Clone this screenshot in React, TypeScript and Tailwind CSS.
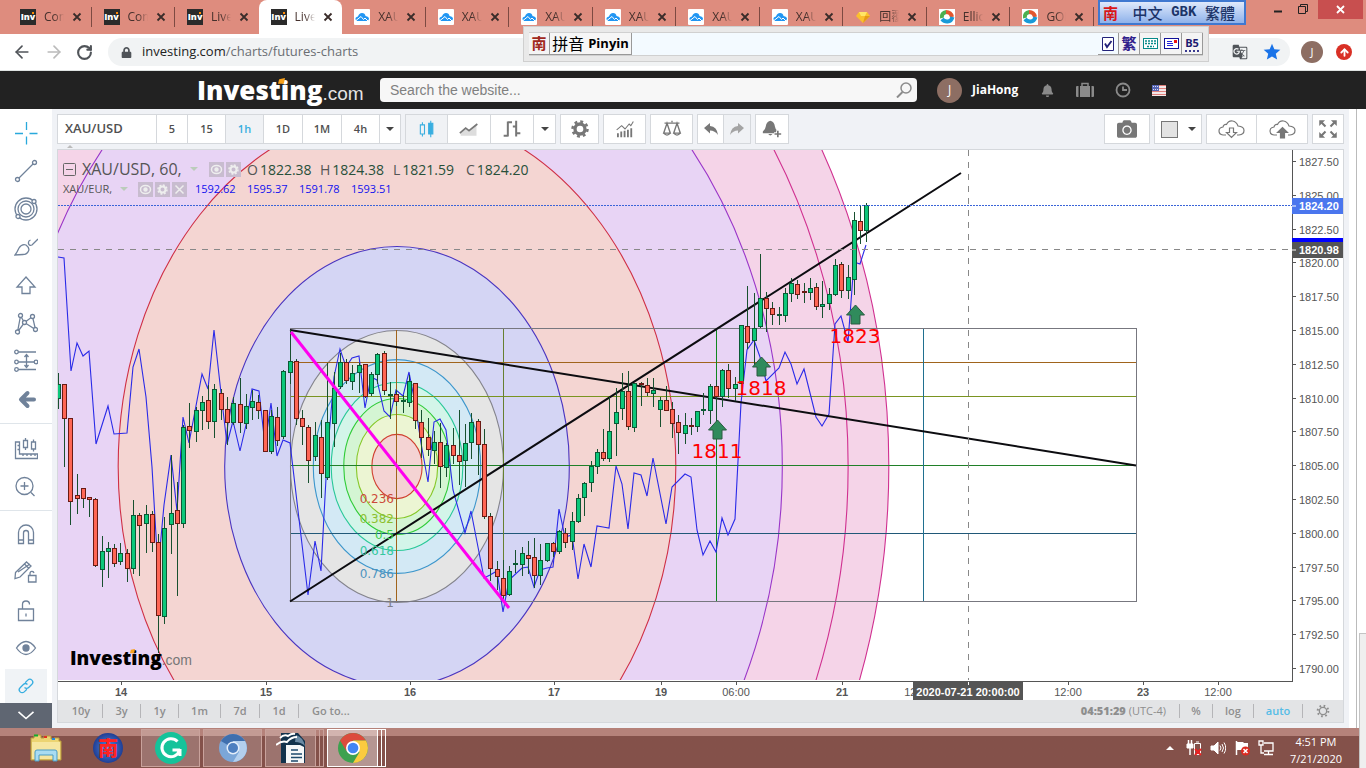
import type { ReactNode } from 'react'
import { clsx } from 'clsx'
import { ArrowLeft, ArrowRight, RotateCw, ArrowUp } from 'lucide-react'
import { FaBell, FaCamera, FaLock } from 'react-icons/fa'
import { MdGTranslate, MdStar } from 'react-icons/md'

type Candle = [x: number, high: number, low: number, top: number, bottom: number, up: 0 | 1]

const candles: Candle[] = [
  [58, 373, 408, 384, 398, 1], [64, 384, 466, 384, 418, 0], [70, 418, 524, 418, 501, 0], [77, 474, 513, 495, 498, 0],
  [83, 488, 507, 488, 498, 0], [89, 497, 516, 497, 499, 0], [95, 498, 566, 499, 565, 0], [102, 536, 586, 551, 569, 1],
  [108, 542, 577, 548, 551, 1], [114, 544, 566, 548, 563, 0], [120, 543, 564, 553, 561, 1], [127, 549, 581, 553, 568, 0],
  [133, 500, 573, 515, 568, 1], [139, 513, 575, 515, 525, 0], [146, 505, 552, 514, 523, 1], [152, 511, 551, 514, 542, 0],
  [158, 534, 652, 542, 615, 0], [164, 517, 623, 528, 616, 1], [171, 455, 553, 513, 524, 1], [177, 482, 595, 510, 523, 0],
  [183, 425, 527, 427, 523, 1], [189, 403, 447, 426, 430, 0], [196, 407, 441, 410, 431, 1], [202, 396, 429, 402, 410, 1],
  [208, 385, 428, 400, 421, 0], [214, 384, 437, 389, 421, 1], [221, 389, 419, 393, 409, 0], [227, 397, 444, 409, 422, 0],
  [233, 397, 424, 403, 422, 1], [240, 378, 432, 404, 422, 0], [246, 394, 428, 406, 423, 1], [252, 390, 419, 401, 407, 1],
  [258, 395, 418, 402, 410, 0], [265, 410, 451, 410, 451, 0], [271, 410, 453, 416, 451, 1], [277, 407, 445, 417, 440, 0],
  [283, 370, 438, 371, 436, 1], [290, 330, 383, 361, 372, 1], [296, 359, 424, 361, 418, 0], [302, 410, 444, 418, 426, 0],
  [308, 425, 482, 427, 460, 0], [315, 422, 460, 435, 456, 1], [321, 420, 497, 437, 473, 0], [327, 363, 479, 422, 477, 1],
  [334, 372, 446, 388, 423, 1], [340, 353, 388, 362, 386, 1], [346, 359, 383, 362, 380, 0], [352, 365, 389, 373, 381, 1],
  [359, 363, 392, 365, 372, 1], [365, 364, 397, 364, 396, 0], [371, 372, 395, 374, 393, 1], [377, 353, 383, 354, 374, 1],
  [384, 351, 394, 353, 390, 0], [390, 382, 418, 394, 395, 1], [396, 390, 405, 394, 401, 0], [403, 395, 412, 400, 401, 1],
  [409, 375, 406, 381, 402, 1], [415, 383, 428, 383, 420, 0], [421, 410, 457, 422, 437, 0], [428, 418, 455, 437, 449, 0],
  [434, 431, 463, 442, 450, 1], [440, 423, 487, 442, 466, 0], [446, 443, 476, 445, 467, 1], [453, 428, 463, 445, 455, 0],
  [459, 410, 484, 455, 461, 0], [465, 424, 486, 443, 460, 1], [471, 413, 458, 422, 442, 1], [478, 419, 474, 421, 444, 0],
  [484, 429, 518, 444, 516, 0], [490, 513, 580, 516, 568, 0], [497, 561, 589, 569, 576, 0], [503, 560, 602, 578, 595, 0],
  [509, 566, 595, 571, 594, 1], [515, 550, 572, 563, 564, 1], [522, 547, 575, 553, 564, 1], [528, 541, 573, 555, 558, 0],
  [534, 538, 587, 557, 575, 0], [540, 544, 584, 560, 575, 1], [547, 543, 561, 543, 560, 1], [553, 542, 556, 543, 551, 0],
  [559, 530, 553, 531, 551, 1], [565, 528, 547, 533, 542, 0], [572, 512, 549, 521, 541, 1], [578, 494, 522, 498, 521, 1],
  [584, 482, 515, 483, 497, 1], [591, 461, 491, 466, 482, 1], [597, 449, 473, 452, 466, 1], [603, 429, 460, 452, 458, 0],
  [609, 397, 461, 431, 458, 1], [616, 388, 455, 412, 423, 1], [622, 373, 419, 391, 408, 1], [628, 371, 429, 391, 426, 0],
  [634, 383, 431, 383, 427, 1], [641, 382, 405, 383, 384, 0], [647, 378, 395, 385, 392, 0], [653, 378, 406, 390, 393, 1],
  [660, 397, 426, 400, 409, 1], [666, 386, 410, 400, 410, 0], [672, 402, 437, 409, 423, 0], [678, 415, 453, 422, 432, 0],
  [685, 413, 443, 425, 433, 1], [691, 418, 434, 425, 426, 0], [697, 411, 431, 411, 426, 1], [703, 393, 414, 409, 410, 1],
  [710, 384, 423, 386, 410, 1], [716, 380, 428, 386, 396, 0], [722, 369, 406, 370, 396, 1], [728, 364, 397, 370, 388, 0],
  [735, 377, 400, 384, 388, 1], [741, 325, 383, 325, 383, 1], [747, 286, 348, 326, 342, 0], [754, 293, 365, 328, 340, 1],
  [760, 254, 327, 298, 326, 1], [766, 292, 331, 298, 308, 0], [772, 302, 324, 308, 314, 0], [779, 307, 324, 314, 315, 1],
  [785, 288, 321, 293, 315, 1], [791, 278, 301, 283, 293, 1], [797, 280, 298, 284, 294, 0], [804, 283, 302, 291, 292, 0],
  [810, 278, 299, 288, 292, 1], [816, 283, 309, 287, 306, 0], [822, 281, 317, 304, 306, 1], [829, 288, 309, 294, 303, 1],
  [835, 259, 295, 265, 294, 1], [841, 262, 297, 264, 290, 0], [848, 265, 298, 277, 290, 1], [854, 212, 294, 220, 279, 1],
  [860, 206, 243, 221, 230, 0], [866, 203, 241, 205, 230, 1],
]

const eurLine =
  '58,257 64,258 71,371 77,343 83,356 89,351 96,444 108,406 114,434 127,433 133,367 139,349 146,397 152,467 158,570 164,505 171,455 177,511 183,417 189,443 202,374 208,389 214,330 221,393 227,444 233,421 240,451 246,425 252,389 259,391 265,445 271,403 277,456 283,440 290,443 308,595 315,541 321,571 327,460 334,377 340,349 346,367 352,358 359,356 365,408 371,377 377,380 384,411 390,417 396,390 403,396 409,372 415,403 421,443 428,482 434,422 440,419 446,430 453,490 465,533 471,511 484,578 490,575 497,571 503,612 509,580 522,568 528,567 534,587 540,570 547,568 553,567 559,509 565,537 572,535 578,579 584,544 591,567 597,526 603,527 609,528 616,466 622,484 628,529 634,473 641,475 647,496 653,458 666,524 672,487 685,474 691,477 697,530 703,555 710,541 716,552 722,518 728,535 735,519 741,403 747,350 754,340 760,357 766,381 779,368 785,352 791,364 797,384 804,369 816,417 822,426 829,414 835,324 841,316 848,342 854,262 860,264 866,245'

const rings = [
  { level: 4.618, fill: '#f5d4e8', stroke: '#d03090' },
  { level: 4.236, fill: '#f5d4e8', stroke: '#d03090' },
  { level: 3.618, fill: '#e8d4f5', stroke: '#9a35c8' },
  { level: 2.618, fill: '#f4d5d2', stroke: '#cf2f45' },
  { level: 1.618, fill: '#d4d5f4', stroke: '#4a35c0' },
  { level: 1, fill: '#e5e5e5', stroke: '#84848c' },
  { level: 0.786, fill: '#d3e9f5', stroke: '#3c96cc' },
  { level: 0.618, fill: '#d3f5e9', stroke: '#28c898' },
  { level: 0.5, fill: '#d4f5d3', stroke: '#30cc38' },
  { level: 0.382, fill: '#ecf5d3', stroke: '#86c828' },
  { level: 0.236, fill: '#f4d3d3', stroke: '#d04030' },
]

const ringLabels = [
  { text: '0.236', y: 503, fill: '#cc4a3a' },
  { text: '0.382', y: 523, fill: '#8cc030' },
  { text: '0.5', y: 539, fill: '#40cc48' },
  { text: '0.618', y: 555, fill: '#34c8a0' },
  { text: '0.786', y: 578, fill: '#4c94c0' },
  { text: '1', y: 607, fill: '#808088' },
]

const timeTicks = [
  { x: 121, text: '14', bold: true }, { x: 266, text: '15', bold: true }, { x: 410, text: '16', bold: true },
  { x: 554, text: '17', bold: true }, { x: 661, text: '19', bold: true }, { x: 736, text: '06:00' },
  { x: 842, text: '21', bold: true }, { x: 918, text: '12:00' }, { x: 1068, text: '12:00' },
  { x: 1143, text: '23', bold: true }, { x: 1218, text: '12:00' },
]

const signals = [
  { x: 717, y: 420, text: '1811' },
  { x: 761, y: 357, text: '1818' },
  { x: 855, y: 305, text: '1823' },
]

function Chart() {
  return (
    <svg viewBox="58 150 1285 550" className="block h-auto w-full bg-white" role="img" aria-label="XAU/USD chart">
      <clipPath id="plot">
        <rect x="58" y="150" width="1234" height="530" />
      </clipPath>
      <g clipPath="url(#plot)" fill="none">
        {rings.map((r) => (
          <ellipse key={r.level} cx="397" cy="466.5" rx={106.5 * r.level} ry={136 * r.level} fill={r.fill} stroke={r.stroke} strokeWidth="1.1" />
        ))}
        <g shapeRendering="crispEdges">
          <path d="M290 362.5H1136" stroke="#a0641c" />
          <path d="M290 396.5H1136" stroke="#7a9420" />
          <path d="M290 465.5H1136" stroke="#208028" />
          <path d="M290 533.5H1136" stroke="#205878" />
          <path d="M396.5 330V602" stroke="#a0641c" />
          <path d="M503.5 328V601" stroke="#668030" />
          <path d="M716.5 330V601" stroke="#108820" />
          <path d="M923.5 328V601" stroke="#207090" />
          <rect x="290.5" y="328.5" width="846" height="273" stroke="#77777f" />
        </g>
        <polyline points={eurLine} stroke="#2a2ae8" strokeWidth="1.1" />
        <path d="M290 330L1136 465.5M290 601.5L961 173" stroke="#0c0c10" strokeWidth="2" />
        {candles.map(([x, high, low, top, bottom, up]) => (
          <g key={x} shapeRendering="crispEdges">
            <path d={`M${x + 0.5} ${high}V${low + 1}`} stroke="#18502f" />
            <rect
              x={x - 1.5}
              y={top + 0.5}
              width="4"
              height={bottom - top}
              fill={up ? '#0cc77a' : '#ff6655'}
              stroke={up ? '#0a5a35' : '#6a1a14'}
            />
          </g>
        ))}
        <path d="M291 332L509 608" stroke="#ff00f0" strokeWidth="3" />
        <path d="M58 249.5H1292M968.5 150V681" stroke="#888" strokeDasharray="6 6" />
        <path d="M58 205.5H1292" stroke="#3a64d8" strokeDasharray="2 1" />
        {signals.map((s) => (
          <g key={s.text}>
            <path
              d={`M${s.x + 0.5} ${s.y}l9 10h-4.500v9h-9v-9h-4.500z`}
              fill="#308b5c"
              stroke="#2a5a40"
            />
            <text x={s.x} y={s.y + 38} textAnchor="middle" fontSize="20" fill="#f00" fontFamily="DejaVu Sans">
              {s.text}
            </text>
          </g>
        ))}
        {ringLabels.map((l) => (
          <text key={l.text} x="394" y={l.y} textAnchor="end" fontSize="12" fill={l.fill} fontFamily="DejaVu Sans">
            {l.text}
          </text>
        ))}
      </g>

      {/* price scale */}
      <path d="M58 681.5H1292.5V150" fill="none" stroke="#555" shapeRendering="crispEdges" />
      <g fontSize="11" fontFamily="Liberation Sans" fill="#555">
        {Array.from({ length: 16 }, (_, i) => {
          const y = Math.round(161 + i * 33.8)
          return (
            <g key={i}>
              <path d={`M1293 ${y + 0.5}h3`} stroke="#555" />
              <text x="1299" y={y + 5}>{(1827.5 - i * 2.5).toFixed(2)}</text>
            </g>
          )
        })}
        {timeTicks.map((t) => (
          <g key={t.x}>
            <path d={`M${t.x + 0.5} 682v3`} stroke="#555" />
            <text x={t.x} y="696" textAnchor="middle" fontWeight={t.bold ? 700 : 400}>{t.text}</text>
          </g>
        ))}
        <rect x="1292" y="198" width="51" height="16" fill="#4a76ee" />
        <rect x="1292" y="238" width="51" height="4" fill="#00f" />
        <rect x="1292" y="242" width="51" height="16" fill="#555" />
        <rect x="913" y="682" width="110" height="18" fill="#555" />
        <path d="M1292 206h4M1292 250h4M968.5 682v3" stroke="#fff" />
        <g fill="#fff" fontWeight="700">
          <text x="1299" y="210">1824.20</text>
          <text x="1299" y="254">1820.98</text>
          <text x="968" y="696" textAnchor="middle">2020-07-21 20:00:00</text>
        </g>
      </g>
    </svg>
  )
}

function InvestingLogo({ small }: { small?: boolean }) {
  return (
    <span className="relative flex items-baseline leading-none">
      <span className={clsx("font-['Open_Sans'] font-extrabold", small ? 'text-[19px] text-black' : 'text-[26px] text-white')}>
        Investing
      </span>
      <span className={clsx("font-['Liberation_Sans']", small ? 'text-[14px] text-[#777]' : 'text-[19px] text-[#e4e4e4]')}>.com</span>
      <svg className={clsx('absolute', small ? 'left-[60px] top-0 size-[5px]' : 'left-[81px] top-[1px] size-[7px]')} viewBox="0 0 6 6">
        <path d="M1 1L6 0L5 5H0z" fill="#f7a01b" />
      </svg>
    </span>
  )
}

function Legend() {
  const boxes = (n: number) =>
    [
      <g key="eye"><ellipse cx="7.5" cy="7.5" rx="5" ry="4" /><circle cx="7.5" cy="7.5" r="1.5" fill="#eee" /></g>,
      <g key="gear"><circle cx="7.5" cy="7.5" r="3" strokeWidth="2" /><circle cx="7.5" cy="7.5" r="4.5" strokeDasharray="2 1.5" /></g>,
      <path key="x" d="M3.500 3.500l8 8M11.500 3.500l-8 8" />,
    ]
      .slice(0, n)
      .map((icon, i) => (
        <svg key={i} className="size-[15px] bg-[#c8bccf]" viewBox="0 0 15 15" fill="none" stroke="#eee" strokeWidth="1.500">
          {icon}
        </svg>
      ))
  return (
    <div className="absolute left-[5px] top-[9px] font-['Open_Sans'] text-[#555]">
      <div className="flex h-5 items-center text-[14px]">
        <svg className="mr-[6px] size-[13px]" viewBox="0 0 13 13" fill="none" stroke="#666">
          <rect x=".5" y=".5" width="12" height="12" rx="1" />
          <path d="M3 6.500h7" />
        </svg>
        <span className="w-[104px] whitespace-nowrap text-[16px]">XAU/USD, 60,</span>
        <span className="mx-1 h-0 w-0 border-x-4 border-t-4 border-x-transparent border-t-[#bcb]" />
        <span className="ml-[7px] flex w-[38px] gap-[2px]">{boxes(2)}</span>
        {[['O', '1822.38'], ['H', '1824.38'], ['L', '1821.59'], ['C', '1824.20']].map(([k, v]) => (
          <span key={k} className="flex w-[73px] gap-[2px]">
            {k}
            <span className="text-[#28503a]">{v}</span>
          </span>
        ))}
      </div>
      <div className="flex h-5 items-center text-[11px]">
        <span className="w-[57px]">XAU/EUR,</span>
        <span className="h-0 w-0 border-x-4 border-t-4 border-x-transparent border-t-[#bcb]" />
        <span className="ml-[10px] flex w-[57px] gap-[2px]">{boxes(3)}</span>
        {['1592.62', '1595.37', '1591.78', '1593.51'].map((v) => (
          <span key={v} className="w-[52px] text-[#11e]">{v}</span>
        ))}
      </div>
    </div>
  )
}

function Favicon({ kind }: { kind: string }) {
  if (kind === 'inv')
    return (
      <span className="relative flex size-4 items-center justify-center bg-[#2b2b2b] font-['Open_Sans'] text-[9px] font-extrabold text-white">
        Inv
        <span className="absolute right-[2px] top-[3px] size-[2px] bg-orange-400" />
      </span>
    )
  if (kind === 'cloud')
    return (
      <svg className="size-4" viewBox="0 0 16 16">
        <rect width="16" height="16" rx="1" fill="#fff" />
        <path d="M3 12Q1 11 1.500 9Q2.500 7.500 4 7.500Q5 4 8 4Q11 4 11.500 7Q15 7.500 15 10Q14.500 12 12.500 12z" fill="#2196f3" />
        <path d="M2 11.500L7 7.500L9.500 10.500L11 9L14 12" fill="none" stroke="#fff" />
      </svg>
    )
  if (kind === 'gem')
    return (
      <svg className="size-4" viewBox="0 0 16 16">
        <path d="M4 3h8l3 4-7 7-7-7z" fill="#fbc02d" />
        <path d="M4 3h8l-2 4H6z" fill="#ffe566" />
        <path d="M10 7h5l-7 7z" fill="#e59a18" />
      </svg>
    )
  return (
    <svg className="size-4" viewBox="0 0 16 16" fill="none" strokeWidth="4">
      <rect width="16" height="16" fill="#fff" />
      <path d="M3 9Q2 4 7.500 3" stroke="#4caf50" />
      <path d="M7 3Q12 3 13 8" stroke="#e4572e" />
      <path d="M13.500 8Q12 13 8 12.500Q5 12.500 3 10" stroke="#1a9ad8" />
    </svg>
  )
}

const tabs = [
  ['inv', 'Com'], ['inv', 'Com'], ['inv', 'Live'], ['inv', 'Live'], ['cloud', 'XAU'], ['cloud', 'XAU'], ['cloud', 'XAU'],
  ['cloud', 'XAU'], ['cloud', 'XAU'], ['cloud', 'XAU'], ['gem', '回覆'], ['swirl', 'Ellio'], ['swirl', 'GOL'],
]

function TabStrip() {
  return (
    <div className="flex h-[34px] bg-[#de8c7e] pl-2">
      <div className="flex min-w-0 flex-1">
        {tabs.map(([icon, title], i) => (
          <div
            key={i}
            className={clsx(
              'relative flex min-w-0 flex-1 items-center pl-3',
              i === 3 && 'rounded-t-lg bg-white',
            )}
          >
            <Favicon kind={icon} />
            <span className="ml-2 w-5 overflow-hidden whitespace-nowrap font-['Open_Sans','Noto_Sans_CJK_TC'] text-[12px] text-[#45302c] [mask-image:linear-gradient(to_right,black_50%,transparent)]">
              {title}
            </span>
            <button aria-label="Close tab" className="ml-2">
              <svg className="size-[10px]" viewBox="0 0 10 10" stroke="#3a2c2a" strokeWidth="1.800">
                <path d="M1.500 1.500l7 7M8.500 1.500l-7 7" />
              </svg>
            </button>
            {i !== 3 && i !== 2 && <span className="ml-auto h-5 w-px bg-[#7d4a42]" />}
          </div>
        ))}
      </div>
      <div className="flex w-[272px] justify-end pr-[3px]">
        <button aria-label="Minimize" className="h-5 w-6">
          <svg className="size-full" viewBox="0 0 24 20"><path d="M6 11.500h8" stroke="#222" strokeWidth="2" /></svg>
        </button>
        <button aria-label="Restore" className="mr-[2px] h-5 w-6">
          <svg className="size-full" viewBox="0 0 24 20" fill="none" stroke="#222"><path d="M6.500 6.500h7v7h-7zM8.500 6V4.500h7v7H14" /></svg>
        </button>
        <button aria-label="Close" className="h-[19px] w-[45px] bg-[#c84f4f]">
          <svg className="size-full" viewBox="0 0 45 19"><path d="M19 6l7 7M26 6l-7 7" stroke="#fff" strokeWidth="1.800" /></svg>
        </button>
      </div>
    </div>
  )
}

function AddressBar() {
  return (
    <div className="flex h-[37px] items-center border-b border-[#dfe3e2] bg-white pl-[12px] pr-[14px] text-[#505459]">
      <button aria-label="Back" className="w-8"><ArrowLeft size={20} strokeWidth={2} /></button>
      <button aria-label="Forward" className="w-8 text-[#bbb]"><ArrowRight size={20} strokeWidth={2} /></button>
      <button aria-label="Reload" className="w-8"><RotateCw size={17} strokeWidth={3} /></button>
      <div className="flex h-7 flex-1 items-center rounded-full bg-[#f1f3f4] pl-[13px] pr-[8px]">
        <FaLock size={11} />
        <a href="#" className="ml-[10px] flex-1 font-['Open_Sans'] text-[13px] text-[#6a6e73]">
          <span className="text-[#222]">investing.com</span>/charts/futures-charts
        </a>
        <MdGTranslate size={16} className="mr-[14px]" />
        <MdStar size={20} color="#1a73e8" />
      </div>
      <span className="ml-[11px] flex size-[22px] items-center justify-center rounded-full bg-[#8d6e63] font-['Open_Sans'] text-[11px] text-white">J</span>
      <button aria-label="Update" className="ml-[13px] flex size-4 items-center justify-center rounded-full bg-[#d93025] text-white">
        <ArrowUp size={11} strokeWidth={4} />
      </button>
    </div>
  )
}

function SiteHeader() {
  return (
    <header className="flex h-[38px] items-center bg-[#222] pl-[197px]">
      <a href="#" className="w-[183px] shrink-0"><InvestingLogo /></a>
      <label className="flex h-6 min-w-0 flex-1 items-center rounded-sm bg-[#f7f7f7] px-[5px]">
        <input
          aria-label="Search the website"
          placeholder="Search the website..."
          className="min-w-0 flex-1 bg-transparent px-[5px] font-['Liberation_Sans'] text-[14px] outline-none placeholder:text-[#808080]"
        />
        <svg className="size-4" viewBox="0 0 16 16" fill="none" stroke="#8c8c8c" strokeWidth="1.500">
          <circle cx="10" cy="6" r="5" />
          <path d="M6.500 10L1 15.500" strokeWidth="2" />
        </svg>
      </label>
      <div className="flex w-[449px] shrink-0 items-center pl-5 text-[#8a8a8a]">
        <span className="flex size-[25px] items-center justify-center rounded-full bg-[#8d6e63] font-['Open_Sans'] text-[12px] text-white">J</span>
        <a href="#" className="ml-[10px] w-[69px] font-['Open_Sans'] text-[12px] font-bold text-white">JiaHong</a>
        <button aria-label="Alerts"><FaBell size={13} /></button>
        <button aria-label="Portfolio" className="ml-[22px]">
          <svg className="h-4 w-[18px]" viewBox="0 0 18 16" fill="currentColor">
            <path d="M1 4h1.500v11H1Q0 15 0 14V5Q0 4 1 4zM15.500 4H17Q18 4 18 5v9q0 1-1 1h-1.500zM4 4h10v11H4z" />
            <path d="M6 4V1.500h6V4" fill="none" stroke="currentColor" strokeWidth="1.500" />
          </svg>
        </button>
        <button aria-label="Recent" className="ml-[21px]">
          <svg className="size-4" viewBox="0 0 16 16" fill="none" stroke="currentColor" strokeWidth="1.800">
            <circle cx="8" cy="8" r="6.500" />
            <path d="M8 4.500V8h4" />
          </svg>
        </button>
        <svg className="ml-[21px] h-[11px] w-[14px]" viewBox="0 0 14 11">
          <rect width="14" height="11" fill="#f3e8e8" />
          <path d="M0 .500h14M0 3.500h14M0 6.500h14M0 9.500h14" stroke="#e0807c" />
          <rect width="7" height="6" fill="#5565b4" />
          <path d="M1 1.500h5M1 4.500h5" stroke="#dde" strokeDasharray="1 1" />
        </svg>
      </div>
    </header>
  )
}

function Icon({ children, className = 'size-6' }: { children: ReactNode; className?: string }) {
  return (
    <svg className={className} viewBox="0 0 24 24" fill="none" stroke="currentColor" strokeWidth="1.300">
      {children}
    </svg>
  )
}

const drawTools: [string, ReactNode][] = [
  ['Trend line', <><path d="M4.500 19.500L19.500 4.500" /><circle cx="3.500" cy="20.500" r="2" fill="#fff" /><circle cx="20.500" cy="3.500" r="2" fill="#fff" /></>],
  ['Fib circles', <><circle cx="12" cy="12" r="11" /><circle cx="12" cy="12" r="8" /><circle cx="12" cy="12" r="5" /><circle cx="20" cy="4.500" r="2" fill="#fff" /><circle cx="4" cy="19.500" r="2" fill="#fff" /></>],
  ['Brush', <path d="M1 20Q3 17.500 5 13Q8 8.500 12 10Q16 13 14.500 16Q13 19.500 9 19.500zM24 4l-6 6q-3 1-3.500-1.500Q14 6 16.500 5" />],
  ['Arrow', <path d="M12 4L21 14h-5v6.500H8V14H3z" />],
  ['Pattern', <><path d="M3.500 21L6.500 5M6.500 5L10.500 11.500L18.500 5.500L21.500 18.500L10.500 11.500L3.500 21" /><circle cx="3.500" cy="21" r="2" fill="#fff" /><circle cx="6.500" cy="4.500" r="2" fill="#fff" /><circle cx="10.500" cy="11.500" r="2" fill="#fff" /><circle cx="18.500" cy="5.500" r="2" fill="#fff" /><circle cx="21.500" cy="18.500" r="2" fill="#fff" /></>],
  ['Position', <><path d="M4 3h18M4 13h16M4 20.500h18M12.500 6v11M10.500 8l2-2.500 2 2.500M10.500 16l2 2.500 2-2.500" /><circle cx="2.500" cy="3" r="1.800" fill="#fff" /><circle cx="2.500" cy="13" r="1.800" fill="#fff" /><circle cx="22" cy="13" r="1.800" fill="#fff" /><circle cx="2.500" cy="20.500" r="1.800" fill="#fff" /></>],
  ['Back', <path d="M20 12.500H7M13.500 6L7 12.500l6.500 6.500" strokeWidth="4" strokeLinecap="round" strokeLinejoin="round" />],
]

const measureTools: [string, ReactNode][] = [
  ['Measure', <><path d="M1.500 5h4v12h18v4.500h-22zM3.500 8.500h2M3.500 12.500h2M9 19v-2M13 19v-2M17 19v-2M21 19v-2M11.500 1v2.500M11.500 10.500V13M19.500 2.500V5M19.500 12v2.500" /><path d="M9.500 3.500h4v7h-4zM17.500 5h4v7h-4z" /></>],
  ['Zoom in', <><circle cx="10.500" cy="11" r="8.500" /><path d="M6.500 11h8M10.500 7v8M17 17.500l3.500 3.500" /></>],
]

const lockTools: [string, ReactNode][] = [
  ['Magnet', <path d="M4.500 21.500V10.500a7.500 7.500 0 0 1 15 0V21.500h-5V11a2.500 2.500 0 0 0-5 0v10.500zM4.500 18h5M14.500 18h5" />],
  ['Lock drawing', <><path d="M1.500 12.500L12.500 2l4.500 4L6 17l-5 1.500zM4 12l12-8M10.500 4l4.500 4.500" /><path d="M14.500 15.500h7.500v6.500h-7.500zM16 15.500v-2.500q.500-2 2.500-1.500 1 0 1.500 1.500" fill="#fff" /></>],
  ['Lock all', <path d="M4.500 11h15v11.500h-15zM8.500 11V6.500Q8.500 3 12 3t3.500 3.500M12 15.500v3" />],
  ['Hide', <><path d="M2.500 12Q7 5.500 12 5.500T21.500 12Q17 18.500 12 18.500T2.500 12z" /><circle cx="12" cy="12" r="3" fill="currentColor" /></>],
]

function ToolGroup({ tools }: { tools: [string, ReactNode][] }) {
  return (
    <>
      {tools.map(([name, icon]) => (
        <button key={name} aria-label={name} className="flex h-[38px] items-center justify-center">
          <Icon>{icon}</Icon>
        </button>
      ))}
    </>
  )
}

function DrawingBar() {
  return (
    <aside className="flex w-[52px] shrink-0 flex-col bg-white pt-[5px] text-[#70829a]">
      <button aria-label="Cross" className="flex h-[38px] items-center justify-center text-[#29a9dc]">
        <Icon><path d="M1 12.500h8M15.500 12.500h8M12.500 1v8M12.500 15.500v8" /></Icon>
      </button>
      <ToolGroup tools={drawTools} />
      <hr className="mb-[6px] mt-[5px] border-[#dfe5ea]" />
      <ToolGroup tools={measureTools} />
      <hr className="my-1 border-[#dfe5ea]" />
      <ToolGroup tools={lockTools} />
      <button aria-label="Link" className="mx-[5px] mt-[2px] flex h-[34px] items-center justify-center bg-[#f0f3f6] text-[#38aee0]">
        <Icon className="size-5">
          <g transform="rotate(45 12 12)">
            <path d="M8.500 10V5.500a3.500 3.500 0 0 1 7 0V11a3.500 3.500 0 0 1-3.500 3.500M15.500 14v4.500a3.500 3.500 0 0 1-7 0V13a3.500 3.500 0 0 1 3.500-3.500" strokeWidth="1.500" />
          </g>
        </Icon>
      </button>
      <button aria-label="More" className="flex flex-1 items-center justify-center bg-[#5f6672] text-white">
        <Icon className="h-5 w-[22px]"><path d="M3 7l9 8 9-8" strokeWidth="2" /></Icon>
      </button>
    </aside>
  )
}

function Group({ children, label }: { children: ReactNode; label?: string }) {
  return (
    <div aria-label={label} className="flex h-[30px] divide-x divide-[#d5d8dc] border border-[#d5d8dc] bg-white">
      {children}
    </div>
  )
}

function Cell({ w, active, label, children }: { w: string; active?: boolean; label?: string; children: ReactNode }) {
  return (
    <button aria-label={label} className={clsx('flex items-center justify-center', w, active && 'bg-[#f0f2f5] text-[#39aee0]')}>
      {children}
    </button>
  )
}

const Caret = () => <span className="h-0 w-0 border-x-4 border-t-4 border-x-transparent border-t-[#444]" />

function ChartToolbar() {
  return (
    <div className="relative mb-[5px] flex gap-1 font-['Open_Sans'] text-[11px] font-semibold text-[#505050]">
      <Group label="Symbol and interval">
        <button className="w-[99px] pl-[7px] text-left text-[13px]">XAU/USD</button>
        <Cell w="w-[31px]">5</Cell>
        <Cell w="w-[38px]">15</Cell>
        <Cell w="w-[38px]" active>1h</Cell>
        <Cell w="w-[39px]">1D</Cell>
        <Cell w="w-[39px]">1M</Cell>
        <Cell w="w-[38px]">4h</Cell>
        <Cell w="w-[20px]" label="More intervals"><Caret /></Cell>
      </Group>
      <Group label="Chart style">
        <Cell w="w-[42px]" active label="Candles">
          <Icon className="size-5"><path d="M6.500 4v3M6.500 18v3M4 7h5v11H4zM16.500 2v20" /><path d="M14 5h5v13h-5z" fill="currentColor" /></Icon>
        </Cell>
        <Cell w="w-[43px]" label="Area">
          <Icon className="size-5"><path d="M2 17l6-5 4 3 9-8v13H2z" fill="#ddd" stroke="none" /><path d="M1 17l7-6 4 3 10-8" stroke="#777" strokeWidth="2" /></Icon>
        </Cell>
        <Cell w="w-[43px]" label="Bars">
          <Icon className="size-5"><path d="M7 3v18M2 20h5M7 4h5M17 2v19M13 9h4M17 17h5" stroke="#777" strokeWidth="2.400" /></Icon>
        </Cell>
        <Cell w="w-[21px]" label="More styles"><Caret /></Cell>
      </Group>
      <Group><Cell w="w-[37px]" label="Settings">
        <Icon className="size-5"><circle cx="12" cy="12" r="6" stroke="#777" strokeWidth="4" /><circle cx="12" cy="12" r="9" stroke="#777" strokeWidth="3" strokeDasharray="3.500 3.570" /></Icon>
      </Cell></Group>
      <Group><Cell w="w-[41px]" label="Indicators">
        <Icon className="size-5"><path d="M3.500 22v-5M7.500 22v-7M11.500 22v-8M15.500 22v-9M19.500 22V11" stroke="#777" strokeWidth="2.200" /><path d="M2 13l6-5 4 4 5-6 2 2 3-5" stroke="#777" /></Icon>
      </Cell></Group>
      <Group><Cell w="w-[41px]" label="Compare">
        <Icon className="size-5"><path d="M12 2v2M3 5h18M6 5L2 17h8zM18 5l-4 12h8zM2 17q4 4.500 8 0M14 17q4 4.500 8 0" stroke="#777" strokeWidth="1.600" /></Icon>
      </Cell></Group>
      <Group>
        <Cell w="w-[26px]" label="Undo">
          <svg className="h-3 w-[14px]" viewBox="0 0 14 12"><path d="M0 5L6 0v3q7 .500 8 9q-3-4.500-8-4.500v3z" fill="#777" /></svg>
        </Cell>
        <Cell w="w-[26px]" active label="Redo">
          <svg className="h-3 w-[14px]" viewBox="0 0 14 12"><path d="M14 5L8 0v3q-7 .500-8 9q3-4.500 8-4.500v3z" fill="#a4a4a4" /></svg>
        </Cell>
      </Group>
      <Group><Cell w="w-[32px]" label="Add alert">
        <Icon className="h-5 w-[22px]">
          <path d="M10 2q5 1.500 5.500 7 .500 4 3.500 6v2H1v-2q3-2 3.500-6Q5 3.500 10 2zM7.500 18h5q-2.500 3.500-5 0z" fill="#777" stroke="none" />
          <path d="M19 13.500v9M14.500 18h9" stroke="#fff" strokeWidth="4" />
          <path d="M19 14v8M15 18h8" stroke="#777" strokeWidth="2" />
        </Icon>
      </Cell></Group>
      <div className="ml-auto flex gap-1">
        <Group><Cell w="w-[44px]" label="Snapshot"><FaCamera size={20} color="#777" /></Cell></Group>
        <Group>
          <button aria-label="Background colour" className="flex w-[46px] items-center justify-center gap-[10px]">
            <span className="size-[17px] border border-[#777] bg-[#e3e3e3]" />
            <Caret />
          </button>
        </Group>
        <Group>
          {['Load', 'Save'].map((name) => (
            <Cell key={name} w="w-[50px]" label={name}>
              <svg className="h-5 w-[27px]" viewBox="0 0 27 20" fill="none" stroke="#777" strokeWidth="1.200">
                <path d="M8 16H5Q1 15.500 1 12T5 8Q5.500 5 8.500 5.500Q10.500 1.500 14.500 2T20 7Q26 7.500 26 11.500T21 16h-2" />
                {name === 'Load' ? (
                  <path d="M11.500 9h4v4.500h3l-5 5-5-5h3z" />
                ) : (
                  <path d="M11.500 19h4v-5.500h3l-5-5-5 5h3z" fill="#777" />
                )}
              </svg>
            </Cell>
          ))}
        </Group>
        <Group><Cell w="w-[30px]" label="Full screen">
          <Icon className="size-5">
            <path d="M9 9L4 4M15 9l5-5M9 15l-5 5M15 15l5 5" stroke="#777" strokeWidth="2.500" />
            <path d="M1.500 1.500h7l-7 7zM22.500 1.500v7l-7-7zM1.500 22.500v-7l7 7zM22.500 22.500h-7l7-7z" fill="#777" stroke="none" />
          </Icon>
        </Cell></Group>
      </div>
      <span className="absolute -bottom-1 left-[10px] h-0 w-0 border-x-3 border-b-3 border-x-transparent border-b-[#bbb]" />
    </div>
  )
}

function RangeBar() {
  const sep = <span className="h-[14px] w-px bg-[#b5b5b8]" />
  return (
    <div className="flex h-[23px] items-center border-b border-[#d5d8dc] bg-[#e3e4e6] font-['Open_Sans'] text-[11px] font-semibold text-[#8e8e8e]">
      <button className="w-[44px] pl-[2px]">10y</button>{sep}
      <button className="w-[37px]">3y</button>{sep}
      <button className="w-[37px]">1y</button>{sep}
      <button className="w-[41px]">1m</button>{sep}
      <button className="w-[38px]">7d</button>{sep}
      <button className="w-[38px]">1d</button>{sep}
      <button className="ml-[13px]">Go to...</button>
      <span className="ml-auto mr-[13px]"><b>04:51:29</b> <span className="font-normal">(UTC-4)</span></span>{sep}
      <button className="w-[32px]">%</button>{sep}
      <button className="w-[40px]">log</button>{sep}
      <button className="w-[48px] text-[#55bce6]">auto</button>{sep}
      <button aria-label="Scale settings" className="flex w-[40px] justify-center">
        <Icon className="size-4"><circle cx="12" cy="12" r="5.500" strokeWidth="2" /><circle cx="12" cy="12" r="8" strokeWidth="3" strokeDasharray="2.500 3.780" /></Icon>
      </button>
    </div>
  )
}

function ImeWindows() {
  const key = 'flex h-[22px] items-center justify-center border-b border-r border-[#999]'
  return (
    <>
      <div className="absolute left-[523px] top-[26px] flex h-9 w-[686px] items-center border border-[#cfcfcf] bg-[#e9e9e9] px-[5px] font-['Open_Sans','Noto_Sans_CJK_TC'] text-black">
        <div className="flex h-6 flex-1 items-center border-y border-[#d0d0d0] bg-[#f3faff]">
          <button className={clsx(key, 'w-[21px] bg-[#f4f4f4] text-[15px] font-bold text-[#a02820]')}>南</button>
          <button className={clsx(key, 'w-[82px] gap-1 bg-[#f6f6f6] text-[13px] font-bold')}>
            <span className="text-[16px] font-normal">拼音</span>Pinyin
          </button>
          <span className="flex-1" />
          <label className={clsx(key, 'w-[21px]')}>
            <input type="checkbox" defaultChecked aria-label="Enable" className="peer sr-only" />
            <svg className="h-[14px] w-3" viewBox="0 0 12 14" fill="#fff" stroke="#22227a"><path d="M.500.500h11v13H.500z" /><path d="M3 6.500l2 3.500 4.500-6" fill="none" strokeWidth="1.800" /></svg>
          </label>
          <button className={clsx(key, 'w-[21px] bg-[#f4f4f4] text-[15px] font-bold text-[#30208c]')}>繁</button>
          <button aria-label="Keyboard" className={clsx(key, 'w-[21px] bg-[#f4f4f4]')}>
            <svg className="h-[11px] w-[15px]" viewBox="0 0 15 11"><rect x=".5" y=".5" width="14" height="10" fill="#fff" stroke="#078a8a" /><path d="M2 3h11M2 5.500h11M4 8.500h7" stroke="#078a8a" strokeWidth="1.500" strokeDasharray="2 1" /></svg>
          </button>
          <button aria-label="Card" className={clsx(key, 'w-[21px] bg-[#f4f4f4]')}>
            <svg className="h-[11px] w-[15px]" viewBox="0 0 15 11"><rect x=".5" y=".5" width="14" height="10" fill="#fff" stroke="#119" /><path d="M3 3.500h5M3 5.500h6M3 7.500h6" stroke="#22d" /><rect x="10" y="2" width="3" height="3" fill="#e11" /></svg>
          </button>
          <button className={clsx(key, 'w-[21px] bg-[#f4f4f4] text-[11px] font-bold text-[#1c1a70]')}>
            <span className="border-b-2 border-dotted border-[#3a3a90] leading-[14px]">B5</span>
          </button>
        </div>
      </div>
      <div className="absolute left-[1098px] top-0 flex h-[25px] w-[148px] items-center justify-between border-2 border-[#3f78d0] bg-linear-to-b from-[#dfe9fb] to-[#8fb2ea] pl-[3px] pr-[9px] font-['Noto_Sans_CJK_TC'] text-[15px] font-medium leading-[21px] text-[#1c3468]">
        <span className="mr-[6px] font-bold text-[#d81818]">南</span>
        <span>中文</span>
        <span className="font-['Liberation_Mono'] text-[14px] font-bold">GBK</span>
        <span>繁體</span>
      </div>
    </>
  )
}

function Taskbar() {
  const win = 'flex h-[38px] items-center justify-center border border-[#c9a29c] bg-white/20'
  return (
    <footer className="flex h-10 items-center bg-linear-to-b from-[#b5827a] from-20% to-[#84514a] to-20% pl-[17px] pr-6 font-['Open_Sans'] text-white">
      <button aria-label="Files" className="flex w-[58px] justify-center">
        <svg className="h-7 w-8" viewBox="0 0 32 28">
          <path d="M1 4h3V1h7v3h3V2h7v3h3V4h5v3h2v19H1z" fill="#ecd472" stroke="#b89a3c" />
          <path d="M4 1.500h4" stroke="#1a3" strokeWidth="2" /><path d="M14 3h3" stroke="#d32" strokeWidth="2" /><path d="M22 5h3" stroke="#28d" strokeWidth="2" />
          <path d="M2 8h28v17H2z" fill="#f6e6a0" />
          <path d="M5 27V18q0-2 2-2h18q2 0 2 2v9h-4v-6H9v6z" fill="#a9dcf2" stroke="#4a9cc4" />
        </svg>
      </button>
      <button aria-label="NJStar" className="flex w-[66px] items-center justify-center">
        <span className="flex size-[30px] items-center justify-center rounded-full bg-radial from-[#5a8ae0] to-[#0c1e78] font-['Noto_Sans_CJK_SC'] text-[20px] font-black text-[#f22]">南</span>
      </button>
      <div className="flex gap-[3px]">
        <button aria-label="Grammarly" className={clsx(win, 'w-[59px]')}>
          <svg className="size-8" viewBox="0 0 32 32" fill="none" stroke="#fff" strokeWidth="3">
            <circle cx="16" cy="16" r="16" fill="#15c39a" stroke="none" />
            <path d="M22.500 9.500A9 9 0 1 0 24.500 18.500M17.500 18H25M25 17v7" />
          </svg>
        </button>
        <button aria-label="Chromium" className={clsx(win, 'w-[59px]')}>
          <svg className="size-7" viewBox="0 0 28 28">
            <circle cx="14" cy="14" r="14" fill="#7ba6d8" />
            <path d="M14 14L1.900 7A14 14 0 0 1 26.100 7H14z" fill="#3f6fae" />
            <path d="M14 28a14 14 0 0 0 12-21H14l6 11z" fill="#b3cfee" />
            <circle cx="14" cy="14" r="6.500" fill="#e4eefa" /><circle cx="14" cy="14" r="5" fill="#4d7fc0" />
          </svg>
        </button>
        <div className="flex">
          <button aria-label="Writer" className={clsx(win, 'w-[51px]')}>
            <svg className="h-8 w-[30px]" viewBox="0 0 30 32">
              <path d="M5 1h17l7 8v22H5z" fill="#12324c" />
              <path d="M10 13h14l4 2v16H10z" fill="#f5f7f8" />
              <path d="M20 3q7 2 9 11-4-4-10-4z" fill="#6a8aa4" />
              <path d="M15 18h7M15 22h11M15 25.500h11M15 29h7" stroke="#1d4a6c" strokeWidth="1.500" />
              <path d="M0 13q6-5 11-3 4-5 10-5M4 6q4-4 8-2 4-3 7-2" fill="none" stroke="#fff" strokeWidth="2" />
            </svg>
          </button>
          <span className="h-[38px] w-1 border border-l-0 border-[#c9a29c]" />
          <span className="h-[38px] w-1 border border-l-0 border-[#c9a29c]" />
        </div>
        <div className="flex">
          <button aria-label="Chrome" className="flex h-[38px] w-[51px] items-center justify-center border border-white bg-white/40">
            <svg className="size-[30px]" viewBox="0 0 28 28">
              <circle cx="14" cy="14" r="14" fill="#3da14f" />
              <path d="M1.900 7A14 14 0 0 1 26.100 7H14L8 17z" fill="#dc4b3c" />
              <path d="M14 28a14 14 0 0 0 12.100-21H14l6 11z" fill="#fbcb3f" />
              <circle cx="14" cy="14" r="6.500" fill="#fff" /><circle cx="14" cy="14" r="5" fill="#4285f4" />
            </svg>
          </button>
          <span className="h-[38px] w-1 border border-l-0 border-white" />
          <span className="h-[38px] w-1 border border-l-0 border-white" />
        </div>
      </div>
      <div className="ml-auto flex items-center gap-2">
        <button aria-label="Hidden icons" className="mr-[4px]">
          <span className="block h-0 w-0 border-x-4 border-b-4 border-x-transparent border-b-white" />
        </button>
        <svg className="size-4" viewBox="0 0 16 16" fill="none" stroke="#fff" role="img" aria-label="Power">
          <path d="M2.500 0v4M5.500 0v4M4 8v7" strokeWidth="1.500" /><path d="M1 4h6v4H1z" fill="#fff" /><path d="M8.500 3.500h6v11h-6zM10 2h3" /><path d="M9 9l6 6M15 9l-6 6" stroke="#e22" strokeWidth="2" />
        </svg>
        <svg className="size-4" viewBox="0 0 16 16" fill="none" stroke="#fff" role="img" aria-label="Volume">
          <path d="M1 6h3l4-4v12l-4-4H1z" fill="#fff" /><path d="M10 5.500q2 2.500 0 5M12 4q3 4 0 8M14 2.500q3.500 5.500 0 11" />
        </svg>
        <svg className="size-4" viewBox="0 0 16 16" role="img" aria-label="Action centre">
          <path d="M2.500 1v14" stroke="#fff" strokeWidth="1.500" /><path d="M3 2h6l1 1h4v7H3z" fill="#fff" /><circle cx="11.500" cy="11" r="4.500" fill="#dc2a20" /><path d="M9.500 9l4 4M13.500 9l-4 4" stroke="#fff" strokeWidth="1.500" />
        </svg>
        <svg className="size-4" viewBox="0 0 16 16" fill="none" stroke="#fff" strokeWidth="1.300" role="img" aria-label="Network">
          <path d="M6 3h9v8H6M10.500 11v3M6 14.500h9M1 1h4v4H1zM3 5v8h3" />
        </svg>
        <time className="ml-2 pt-1 text-center text-[11px] leading-[17px]">4:51 PM<br />7/21/2020</time>
      </div>
    </footer>
  )
}

export default function App() {
  return (
    <div className="relative flex min-h-screen flex-col bg-white">
      <TabStrip />
      <AddressBar />
      <SiteHeader />
      <div className="flex flex-1">
        <DrawingBar />
        <main className="min-w-0 flex-1 bg-[#f0f2f6] px-[5px] pt-[5px]">
          <ChartToolbar />
          <section className="border border-b-0 border-[#d5d8dc]">
            <div className="relative">
              <Chart />
              <Legend />
              <div className="absolute bottom-8 left-3"><InvestingLogo small /></div>
            </div>
            <RangeBar />
          </section>
        </main>
        <div className="w-[17px] pl-[7px]">
          <div className="h-full border-l border-[#bbb]" />
        </div>
      </div>
      <Taskbar />
      <div className="absolute bottom-0 right-0 h-[135px] w-[7px] border-l border-t border-[#c4c4c4] bg-[#efefef]" />
      <ImeWindows />
    </div>
  )
}
